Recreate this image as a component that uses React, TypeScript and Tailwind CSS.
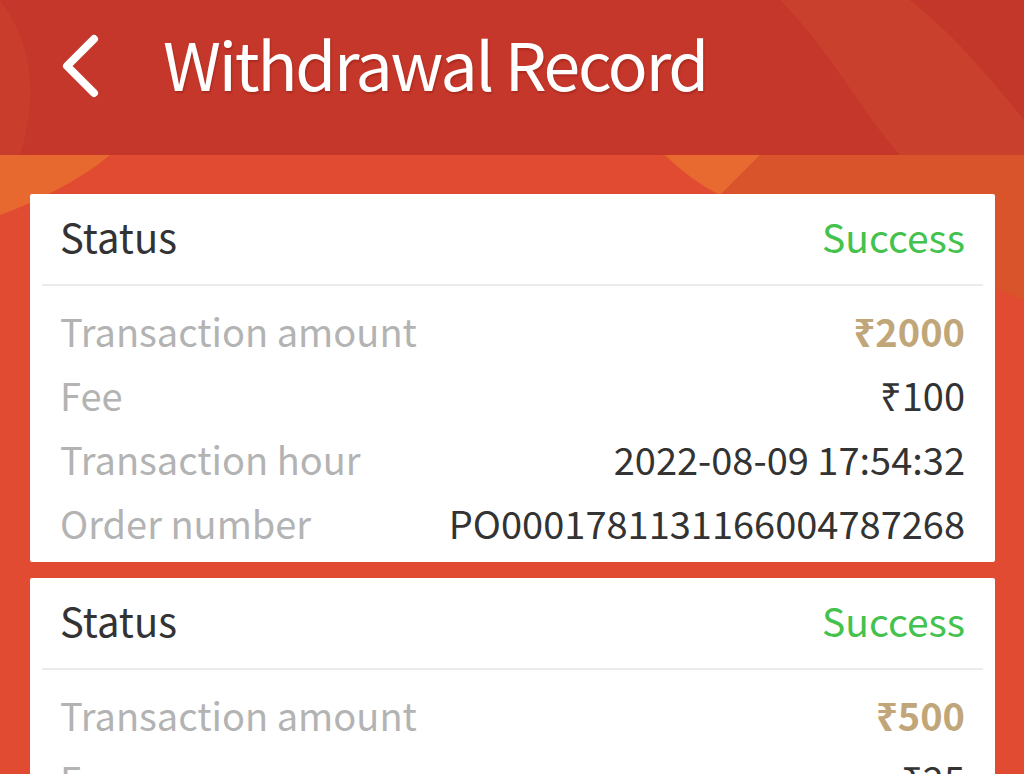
import React from "react";

const font = { fontFamily: '"Noto Sans CJK SC", "Noto Sans", sans-serif' };

type Rec = { amount: string; fee: string; hour: string; order: string };

const records: Rec[] = [
  { amount: "₹2000", fee: "₹100", hour: "2022-08-09 17:54:32", order: "PO0001781131166004787268" },
  { amount: "₹500", fee: "₹25", hour: "2022-08-09 12:10:05", order: "PO0001781131166004712210" },
];

function Card({ r }: { r: Rec }) {
  return (
    <div className="bg-white rounded-[2px] shrink-0">
      <div className="mx-3 h-[92px] pb-[6px] flex items-center justify-between px-[18px] border-b-2 border-[#ebebeb]">
        <span className="text-[40px] text-[#333333] leading-none">Status</span>
        <span className="text-[39px] text-[#43c24d] leading-none">Success</span>
      </div>
      <div className="px-[30px] pt-[13px] pb-[7px] text-[38px] leading-none">
        <div className="h-16 flex items-center justify-between">
          <span className="text-[#b3b3b3]">Transaction amount</span>
          <span className="text-[#c1a679] font-bold">{r.amount}</span>
        </div>
        <div className="h-16 flex items-center justify-between">
          <span className="text-[#b3b3b3]">Fee</span>
          <span className="text-[#333333]">{r.fee}</span>
        </div>
        <div className="h-16 flex items-center justify-between">
          <span className="text-[#b3b3b3]">Transaction hour</span>
          <span className="text-[#333333]">{r.hour}</span>
        </div>
        <div className="h-16 flex items-center justify-between">
          <span className="text-[#b3b3b3]">Order number</span>
          <span className="text-[#333333]">{r.order}</span>
        </div>
      </div>
    </div>
  );
}

export default function App() {
  return (
    <div className="w-[1024px] h-[774px] overflow-hidden relative bg-[#e04b31] flex flex-col" style={font}>
      <svg className="absolute inset-0 pointer-events-none" width="1024" height="774" viewBox="0 0 1024 774">
        <rect x="0" y="0" width="1024" height="155" fill="#c5372a" />
        <path d="M0 0 C30 40 40 90 20 155 L0 155 Z" fill="#c93d2d" />
        <path d="M780 0 C830 50 860 110 900 155 L1024 155 L1024 0 Z" fill="#c9402c" />
        <path d="M910 0 C960 40 1000 90 1024 120 L1024 0 Z" fill="#c3362a" />
        <path d="M0 155 L110 155 C80 180 40 200 0 215 Z" fill="#e8692f" />
        <path d="M660 155 L1024 155 L1024 300 C900 250 760 210 700 180 Z" fill="#d9532b" />
        <path d="M665 155 C680 170 700 185 720 195 L760 155 Z" fill="#e86a30" />
      </svg>
      <div className="relative h-[155px] flex items-start shrink-0">
        <svg className="ml-[57px] mt-[34px]" width="44" height="64" viewBox="0 0 44 64">
          <path d="M37 5 L10 32 L37 59" fill="none" stroke="#ffffff" strokeWidth="8" strokeLinecap="round" strokeLinejoin="round" />
        </svg>
        <span
          className="ml-[62px] mt-[29px] text-[66px] text-white leading-none tracking-[-2.2px] [text-shadow:1px_2px_2px_rgba(120,20,10,0.35)]"
        >
          Withdrawal Record
        </span>
      </div>
      <div className="relative flex flex-col gap-4 pl-[30px] pr-[29px] pt-[39px]">
        {records.map((r, i) => (
          <Card key={i} r={r} />
        ))}
      </div>
    </div>
  );
}
